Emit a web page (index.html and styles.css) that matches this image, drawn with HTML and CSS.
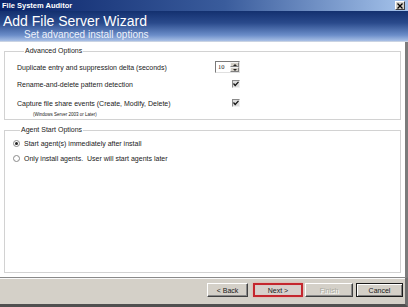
FILE: index.html
```html
<!DOCTYPE html>
<html lang="en">
<head>
  <meta charset="UTF-8" />
  <title>File System Auditor</title>
  <link rel="stylesheet" href="styles.css">
</head>
<body>
  <div class="window">
    <div class="titlebar">
      <span>File System Auditor</span>
      <span class="close">
        <svg width="6" height="6" viewBox="0 0 6 6"><path d="M0.5 0.5 L5.5 5.5 M5.5 0.5 L0.5 5.5" stroke="#000" stroke-width="1.3"/></svg>
      </span>
    </div>

    <div class="banner">
      <h1>Add File Server Wizard</h1>
      <p>Set advanced install options</p>
    </div>

    <div class="content">
      <fieldset class="group advanced">
        <legend>Advanced Options</legend>
        <div class="row row-spin">
          <span class="label">Duplicate entry and suppression delta (seconds)</span>
          <div class="spin">
            <span class="spin-val">10</span>
            <span class="spin-btns"><i class="arrow up"></i><i class="arrow down"></i></span>
          </div>
        </div>
        <div class="row row-check">
          <span class="label">Rename-and-delete pattern detection</span>
          <span class="check">
            <svg width="6" height="6" viewBox="0 0 6 6"><path d="M0.5 2.5 L2.2 4.5 L5.5 0.8" stroke="#111" stroke-width="1.2" fill="none"/></svg>
          </span>
        </div>
        <div class="row row-check2">
          <span class="label">Capture file share events (Create, Modify, Delete)</span>
          <span class="check">
            <svg width="6" height="6" viewBox="0 0 6 6"><path d="M0.5 2.5 L2.2 4.5 L5.5 0.8" stroke="#111" stroke-width="1.2" fill="none"/></svg>
          </span>
        </div>
        <div class="note">(Windows Server 2003 or Later)</div>
      </fieldset>

      <fieldset class="group agent">
        <legend>Agent Start Options</legend>
        <label class="radio-row first">
          <span class="radio checked"></span>
          <span>Start agent(s) immediately after install</span>
        </label>
        <label class="radio-row">
          <span class="radio"></span>
          <span>Only install agents.&nbsp; User will start agents later</span>
        </label>
      </fieldset>
    </div>

    <div class="buttonbar">
      <button class="btn back">&lt; Back</button>
      <button class="btn next">Next &gt;</button>
      <button class="btn finish" disabled>Finish</button>
      <button class="btn cancel">Cancel</button>
    </div>
  </div>
</body>
</html>
```

FILE: styles.css
```css
* {
  margin: 0;
  padding: 0;
  box-sizing: border-box;
}

body {
  width: 408px;
  height: 307px;
  overflow: hidden;
  background: #fff;
  color: #1a1a1a;
  font-family: "Liberation Sans", Arial, sans-serif;
  font-size: 7px;
}

.window {
  display: flex;
  flex-direction: column;
  height: 307px;
}

/* title bar */
.titlebar {
  height: 11px;
  display: flex;
  align-items: center;
  justify-content: space-between;
  padding: 0 3px 0 2px;
  background: linear-gradient(to right, #0a246a 0%, #3a5c9c 55%, #a6c4ec 100%);
  color: #fff;
  font-weight: bold;
  font-size: 7.5px;
}

.close {
  width: 10px;
  height: 9px;
  display: flex;
  align-items: center;
  justify-content: center;
  background: #d4d0c8;
  border: 1px solid;
  border-color: #fff #404040 #404040 #fff;
}

/* header band */
.banner {
  height: 31px;
  padding: 3px 0 0 3px;
  background: linear-gradient(#13306f 0%, #2a4a8c 40%, #6a8cc8 80%, #a9c0e6 100%);
  border-bottom: 1px solid #c9d3e3;
  color: #fff;
}

.banner h1 {
  font-weight: normal;
  font-size: 14px;
  line-height: 15px;
}

.banner p {
  font-size: 10px;
  line-height: 11px;
  padding-left: 21px;
  color: #eef2fa;
}

/* content */
.content {
  flex: 1;
  display: flex;
  flex-direction: column;
  padding: 0 4px 4px 4px;
  border-right: 3px solid #7c7c7c;
}

.group {
  border: 1px solid #d2d2d2;
  min-width: 0;
}

.group legend {
  margin-left: 7px;
  padding: 0 1px;
  line-height: 8px;
  font-size: 7px;
}

.advanced {
  margin-top: 5px;
  padding: 6px 0 1px 12px;
}

.row {
  display: flex;
  align-items: center;
  width: 223px;
  justify-content: space-between;
}

.row-spin {
  height: 12px;
}

.row-check {
  height: 8px;
  margin-top: 7px;
}

.row-check2 {
  height: 8px;
  margin-top: 11px;
}

.note {
  margin-top: 4px;
  padding-left: 16px;
  height: 7px;
  font-size: 4.5px;
  line-height: 7px;
}

.spin {
  width: 25px;
  height: 12px;
  display: flex;
  border: 1px solid;
  border-color: #7a7a7a #e0e0e0 #e0e0e0 #7a7a7a;
  background: #fff;
}

.spin-val {
  flex: 1;
  padding-left: 2px;
  font-family: "Liberation Serif", serif;
  font-size: 6.5px;
  line-height: 10px;
}

.spin-btns {
  width: 9px;
  display: flex;
  flex-direction: column;
}

.arrow {
  flex: 1;
  display: flex;
  align-items: center;
  justify-content: center;
  background: #d4d0c8;
  border: 1px solid;
  border-color: #f4f4f4 #808080 #808080 #f4f4f4;
}

.arrow::after {
  content: "";
  border-left: 2px solid transparent;
  border-right: 2px solid transparent;
}

.up::after {
  border-bottom: 2px solid #222;
}

.down::after {
  border-top: 2px solid #222;
}

.check {
  width: 8px;
  height: 8px;
  display: flex;
  align-items: center;
  justify-content: center;
  background: #dcdcdc;
  border: 1px solid;
  border-color: #8a8a8a #f0f0f0 #f0f0f0 #8a8a8a;
}

.agent {
  flex: 1;
  margin-top: 6px;
  padding: 5px 0 0 8px;
}

.radio-row {
  display: flex;
  align-items: center;
  gap: 4px;
  height: 8px;
  margin-top: 7px;
}

.radio-row.first {
  margin-top: 0;
}

.radio {
  width: 7px;
  height: 7px;
  border-radius: 50%;
  border: 1px solid #8a8a8a;
  background: #fff;
  display: flex;
  align-items: center;
  justify-content: center;
}

.radio.checked::after {
  content: "";
  width: 3px;
  height: 3px;
  border-radius: 50%;
  background: #222;
}

/* bottom buttons */
.buttonbar {
  height: 30px;
  display: flex;
  justify-content: flex-end;
  align-items: flex-start;
  padding: 5px 2px 0 0;
  background: #d4d0c8;
  border-top: 1px solid #8a8a8a;
  box-shadow: inset 0 1px #fafafa;
  border-right: 3px solid #6e6e6e;
  border-bottom: 3px solid #505050;
}

.btn {
  height: 14px;
  font-family: "Liberation Sans", Arial, sans-serif;
  font-size: 7px;
  color: #1a1a1a;
  background: #d4d0c8;
  border: 1px solid;
  border-color: #fff #404040 #404040 #fff;
  box-shadow: inset -1px -1px #8a8a8a;
}

.back {
  width: 41px;
}

.next {
  width: 50px;
  margin-left: 5px;
  border: 2px solid #c4262e;
  box-shadow: 0 0 2px #f0a0a0, inset 0 0 1px #e8b0b0;
  background: #d8d0cc;
}

.finish {
  width: 48px;
  margin-left: 2px;
  color: #a8a8a0;
  text-shadow: 1px 1px #fff;
}

.cancel {
  width: 47px;
  margin-left: 3px;
  border: 1px solid #1a1a1a;
  box-shadow: inset 1px 1px #fff, inset -1px -1px #808080;
}
```
